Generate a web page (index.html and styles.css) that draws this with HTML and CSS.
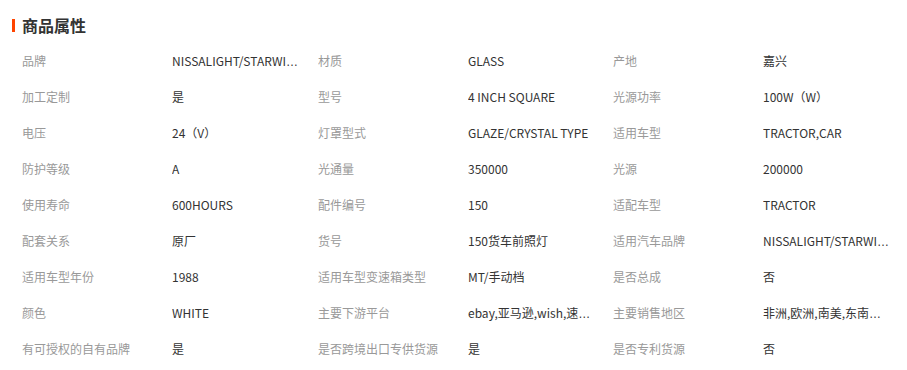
FILE: index.html
```html
<!DOCTYPE html>
<html lang="zh-CN">
<head>
<meta charset="utf-8">
<title>商品属性</title>
<link rel="stylesheet" href="styles.css">
</head>
<body>
<div class="attrs">
  <div class="attrs-head">
    <span class="bar"></span>
    <h2 class="title">商品属性</h2>
  </div>
  <div class="grid">
    <div class="k">品牌</div><div class="v"><span>NISSALIGHT/STARWIZARD</span></div>
    <div class="k">材质</div><div class="v"><span>GLASS</span></div>
    <div class="k">产地</div><div class="v"><span>嘉兴</span></div>

    <div class="k">加工定制</div><div class="v"><span>是</span></div>
    <div class="k">型号</div><div class="v"><span>4 INCH SQUARE</span></div>
    <div class="k">光源功率</div><div class="v"><span>100W（W）</span></div>

    <div class="k">电压</div><div class="v"><span>24（V）</span></div>
    <div class="k">灯罩型式</div><div class="v"><span>GLAZE/CRYSTAL TYPE</span></div>
    <div class="k">适用车型</div><div class="v"><span>TRACTOR,CAR</span></div>

    <div class="k">防护等级</div><div class="v"><span>A</span></div>
    <div class="k">光通量</div><div class="v"><span>350000</span></div>
    <div class="k">光源</div><div class="v"><span>200000</span></div>

    <div class="k">使用寿命</div><div class="v"><span>600HOURS</span></div>
    <div class="k">配件编号</div><div class="v"><span>150</span></div>
    <div class="k">适配车型</div><div class="v"><span>TRACTOR</span></div>

    <div class="k">配套关系</div><div class="v"><span>原厂</span></div>
    <div class="k">货号</div><div class="v"><span>150货车前照灯</span></div>
    <div class="k">适用汽车品牌</div><div class="v"><span>NISSALIGHT/STARWIZARD</span></div>

    <div class="k">适用车型年份</div><div class="v"><span>1988</span></div>
    <div class="k">适用车型变速箱类型</div><div class="v"><span>MT/手动档</span></div>
    <div class="k">是否总成</div><div class="v"><span>否</span></div>

    <div class="k">颜色</div><div class="v"><span>WHITE</span></div>
    <div class="k">主要下游平台</div><div class="v"><span>ebay,亚马逊,wish,速卖通,独立站</span></div>
    <div class="k">主要销售地区</div><div class="v"><span>非洲,欧洲,南美,东南亚,北美</span></div>

    <div class="k">有可授权的自有品牌</div><div class="v"><span>是</span></div>
    <div class="k">是否跨境出口专供货源</div><div class="v"><span>是</span></div>
    <div class="k">是否专利货源</div><div class="v"><span>否</span></div>
  </div>
</div>
</body>
</html>
```

FILE: styles.css
```css
html, body {
  margin: 0;
  padding: 0;
  background: #ffffff;
}

body {
  font-family: "Noto Sans CJK SC", "Noto Sans", sans-serif;
  font-size: 12px;
  color: #333333;
}

.attrs {
  width: 907px;
}

.attrs-head {
  display: flex;
  align-items: center;
  height: 28px;
  padding: 11px 0 4px 12px;
}

.bar {
  width: 3px;
  height: 13px;
  background: #ff4400;
  margin-right: 7px;
}

.title {
  margin: 0;
  font-size: 16px;
  font-weight: bold;
  line-height: 28px;
  color: #333333;
}

.grid {
  display: grid;
  grid-template-columns: 150px 146px 150px 145px 150px 146px;
  grid-auto-rows: 36px;
  padding-left: 22px;
}

.k, .v {
  line-height: 36px;
  white-space: nowrap;
  overflow: hidden;
  text-overflow: ellipsis;
}

.k {
  color: #999999;
}

.v {
  color: #333333;
  max-width: 126px;
  font-family: "Liberation Sans", "Noto Sans CJK SC", sans-serif;
}

.v > span {
  font-family: "Noto Sans CJK SC", "Noto Sans", sans-serif;
}
```
